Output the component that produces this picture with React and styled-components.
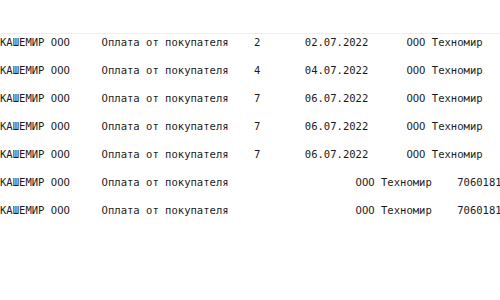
import React from "react";
import styled, { createGlobalStyle } from "styled-components";

const Global = createGlobalStyle`
  html, body { margin: 0; padding: 0; background: #ffffff; }
  body { font-family: "DejaVu Sans Mono", "Liberation Mono", monospace; }
`;

const Page = styled.div`
  width: 500px;
  height: 300px;
  overflow: hidden;
  display: flex;
  flex-direction: column;
`;

const Header = styled.div`
  height: 33px;
  border-bottom: 1px solid #eeeeee;
  flex: none;
`;

const List = styled.div`
  display: flex;
  flex-direction: column;
`;

const Row = styled.div`
  font-family: "DejaVu Sans Mono", "Liberation Mono", monospace;
  font-size: 10.55px;
  line-height: 16px;
  color: #1c1c1c;
  white-space: pre;
  tab-size: 8;
  -moz-tab-size: 8;
  padding: 0 0 12px 0;
`;

const rows = [
  ["КАШЕМИР ООО", "Оплата от покупателя", "2", "02.07.2022", "ООО Техномир"],
  ["КАШЕМИР ООО", "Оплата от покупателя", "4", "04.07.2022", "ООО Техномир"],
  ["КАШЕМИР ООО", "Оплата от покупателя", "7", "06.07.2022", "ООО Техномир"],
  ["КАШЕМИР ООО", "Оплата от покупателя", "7", "06.07.2022", "ООО Техномир"],
  ["КАШЕМИР ООО", "Оплата от покупателя", "7", "06.07.2022", "ООО Техномир"],
  ["КАШЕМИР ООО", "Оплата от покупателя", "", "", "ООО Техномир", "7060181"],
  ["КАШЕМИР ООО", "Оплата от покупателя", "", "", "ООО Техномир", "7060181"],
];

function fmt(cells) {
  const [a, b, c, d, e, f] = cells;
  if (c) return `${a}\t${b}\t${c}\t${d}\t${e}`;
  return `${a}\t${b}\t\t\t${e}\t${f}`;
}

export default function App() {
  return (
    <Page>
      <Global />
      <Header />
      <List>
        {rows.map((r, i) => (
          <Row key={i}>{fmt(r)}</Row>
        ))}
      </List>
    </Page>
  );
}
